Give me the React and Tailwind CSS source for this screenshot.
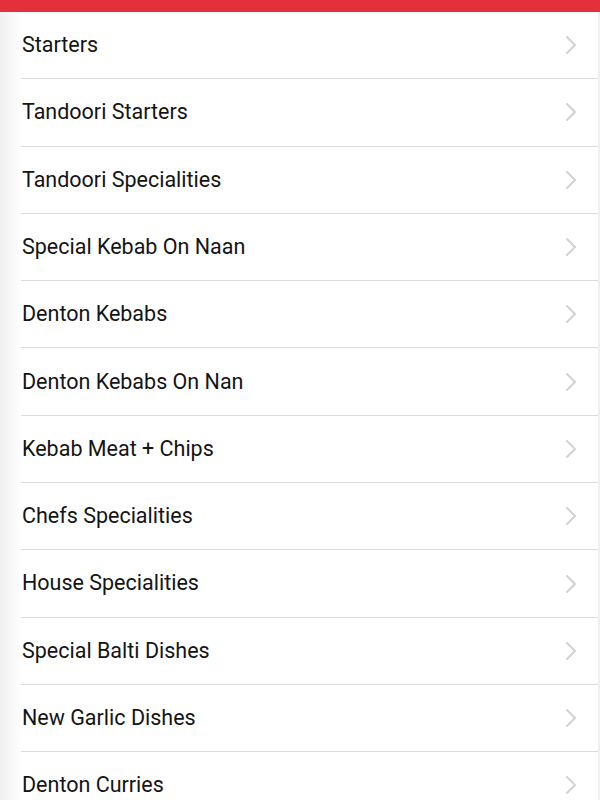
const categories = [
  "Starters",
  "Tandoori Starters",
  "Tandoori Specialities",
  "Special Kebab On Naan",
  "Denton Kebabs",
  "Denton Kebabs On Nan",
  "Kebab Meat + Chips",
  "Chefs Specialities",
  "House Specialities",
  "Special Balti Dishes",
  "New Garlic Dishes",
  "Denton Curries",
  "Vegetable Dishes",
];

const Chevron = () => (
  <svg width="14" height="20" viewBox="0 0 14 20" fill="none" className="shrink-0">
    <path d="M3 2l8 8-8 8" stroke="#d2d2d2" strokeWidth="2" strokeLinecap="round" strokeLinejoin="round" />
  </svg>
);

const App = () => {
  return (
    <div className="w-[600px] h-[800px] overflow-hidden bg-white font-['Roboto',sans-serif]">
      <div className="h-[12px] bg-[#e3303a]" />
      <div className="border-r-2 border-[#efefef] bg-[linear-gradient(to_right,#efefef,#ffffff_22px)]">
        {categories.map((name, index) => (
          <div key={index} className="pl-[21px]">
            <div className="h-[67.3px] flex items-center justify-between border-b border-[#dcdcdc] pr-[20px]">
              <span className="pl-px text-[21.5px] text-[#141414]">{name}</span>
              <Chevron />
            </div>
          </div>
        ))}
      </div>
    </div>
  );
};

export default App;
